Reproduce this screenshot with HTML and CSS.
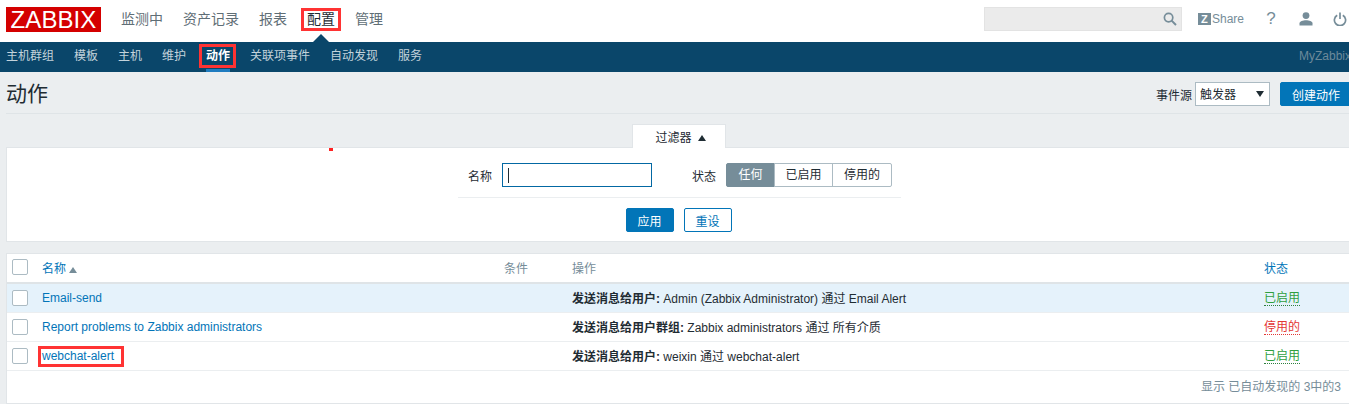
FILE: index.html
```html
<!DOCTYPE html>
<html lang="zh-CN">
<head>
<meta charset="utf-8">
<title>动作</title>
<link rel="stylesheet" href="styles.css">
</head>
<body>
<div class="page">
  <header class="topbar">
    <div class="logo">ZABBIX</div>
    <nav class="mainnav">
      <a>监测中</a><a>资产记录</a><a>报表</a><a class="selected"><span class="mark mark-top">配置</span></a><a>管理</a>
    </nav>
    <div class="tools">
      <div class="search">
        <svg class="ic-search" width="14" height="14" viewBox="0 0 14 14"><circle cx="5.6" cy="5.6" r="4.2" fill="none" stroke="#768d99" stroke-width="1.7"/><path d="M8.6 8.6l4.4 4.4" stroke="#768d99" stroke-width="2"/></svg>
      </div>
      <a class="share"><span class="zbadge">Z</span>Share</a>
      <a class="help">?</a>
      <svg class="ic-user" width="14" height="14" viewBox="0 0 14 14"><circle cx="7" cy="3.6" r="3.4" fill="#768d99"/><path d="M0.5 13.5v-2.2c0-2 3.5-3 6.5-3s6.500 1 6.500 3v2.200z" fill="#768d99"/></svg>
      <svg class="ic-power" width="14" height="14" viewBox="0 0 14 14"><path d="M4.200 3.200a5.600 5.600 0 1 0 5.600 0" fill="none" stroke="#768d99" stroke-width="1.700"/><path d="M7 0.500v6.500" stroke="#768d99" stroke-width="1.700"/></svg>
    </div>
  </header>
  <nav class="subnav">
    <a>主机群组</a><a>模板</a><a>主机</a><a>维护</a><a class="active"><span class="mark mark-sub">动作</span></a><a>关联项事件</a><a>自动发现</a><a>服务</a>
    <span class="myzabbix">MyZabbix</span>
  </nav>
  <div class="titlebar">
    <h1>动作</h1>
    <div class="controls">
      <label class="srclabel">事件源</label>
      <div class="select">触发器<span class="sel-arrow"></span></div>
      <button class="btn create">创建动作</button>
    </div>
  </div>
  <div class="filter-tabs"><div class="filter-tab">过滤器<span class="tri-up"></span></div></div>
  <section class="filter">
    <span class="red-dot"></span>
    <div class="filter-row">
      <label class="flabel">名称</label>
      <div class="input"><span class="caret"></span></div>
      <label class="flabel flabel-state">状态</label>
      <div class="seg"><span class="on">任何</span><span>已启用</span><span>停用的</span></div>
    </div>
    <div class="filter-actions">
      <button class="btn">应用</button>
      <button class="btn ghost">重设</button>
    </div>
  </section>
  <section class="list">
    <table>
      <thead>
        <tr>
          <th class="c-check"><span class="cb"></span></th>
          <th class="c-name"><a class="sortlink">名称</a><span class="tri-sort"></span></th>
          <th class="c-cond">条件</th>
          <th class="c-op">操作</th>
          <th class="c-state"><a class="sortlink">状态</a></th>
        </tr>
      </thead>
      <tbody>
        <tr class="hover">
          <td><span class="cb"></span></td>
          <td><a class="link">Email-send</a></td>
          <td></td>
          <td class="op"><b>发送消息给用户:</b> Admin (Zabbix Administrator) 通过 Email Alert</td>
          <td><a class="st green">已启用</a></td>
        </tr>
        <tr>
          <td><span class="cb"></span></td>
          <td><a class="link">Report problems to Zabbix administrators</a></td>
          <td></td>
          <td class="op"><b>发送消息给用户群组:</b> Zabbix administrators 通过 所有介质</td>
          <td><a class="st red">停用的</a></td>
        </tr>
        <tr>
          <td><span class="cb"></span></td>
          <td><a class="link mark mark-row">webchat-alert</a></td>
          <td></td>
          <td class="op"><b>发送消息给用户:</b> weixin 通过 webchat-alert</td>
          <td><a class="st green">已启用</a></td>
        </tr>
      </tbody>
    </table>
    <div class="foot">显示 已自动发现的 3中的3</div>
  </section>
</div>
</body>
</html>
```
FILE: styles.css
```css
html, body { margin: 0; padding: 0; height: 404px; overflow: hidden; background: #ebeef0; }
body { font-family: "Liberation Sans", "Noto Sans CJK SC", sans-serif; font-size: 12px; color: #1f2c33; }
.page { width: 1362px; height: 404px; overflow: hidden; }
a { text-decoration: none; }

.topbar { height: 42px; background: #fff; display: flex; align-items: flex-start; }
.logo { width: 95px; height: 25px; margin: 7px 0 0 6px; background: #d40000; color: #fff; font-size: 24px; line-height: 25px; text-align: center; letter-spacing: 0.1px; }
.mainnav { display: flex; margin-left: 10px; }
.mainnav a { padding: 0 10px; font-size: 14px; line-height: 20px; margin-top: 9px; color: #5f6e76; position: relative; height: 33px; }
.mainnav a.selected { color: #1f2c33; }
.mainnav a.selected::after { content: ""; position: absolute; left: 50%; bottom: 0; margin-left: -8px; border-left: 8px solid transparent; border-right: 8px solid transparent; border-bottom: 8px solid #0a466a; }
.tools { margin-left: auto; display: flex; align-items: center; height: 38px; padding-right: 15px; }
.search { width: 198px; height: 24px; box-sizing: border-box; background: #ebebeb; border: 1px solid #e3e3e3; display: flex; align-items: center; justify-content: flex-end; padding-right: 4px; }
.share { display: flex; align-items: center; margin-left: 16px; color: #768d99; font-size: 12px; width: 46px; }
.zbadge { width: 13px; height: 12px; background: #768d99; color: #fff; font-size: 11px; font-weight: bold; line-height: 12px; text-align: center; margin-right: 1px; }
.help { margin-left: 21px; width: 12px; text-align: center; color: #768d99; font-size: 17px; }
.ic-user { margin-left: 22px; }
.ic-power { margin-left: 20px; }

.mark { position: relative; display: inline-block; }
.mark-top { outline: 3px solid #ff3333; line-height: 17px; padding: 0 3px; margin: 2px -3px 0; vertical-align: top; }
.mark-sub { outline: 3px solid #ff3333; padding: 0 3px 0 4px; margin: 0 -3px 0 -4px; vertical-align: top; }
.mark-row { outline: 3px solid #ff3333; line-height: 15px; padding: 0 7px 0 1px; margin: 0 -7px 0 -1px; }

.subnav { height: 30px; background: #0a466a; display: flex; align-items: flex-start; padding-left: 6px; }
.subnav a { margin-right: 20px; color: #c3d3db; line-height: 18px; margin-top: 5px; height: 25px; position: relative; }
.subnav a.active { color: #fff; font-weight: bold; }
.subnav a.active::after { content: ""; position: absolute; left: 0; right: 0; bottom: 0; height: 3px; background: #1f7cc0; }
.myzabbix { margin-left: auto; margin-right: 11px; color: #6d8a9b; line-height: 18px; margin-top: 5px; }

.titlebar { height: 41px; margin-left: 6px; border-bottom: 1px solid #dfe4e7; display: flex; justify-content: space-between; align-items: flex-start; padding-right: 10px; }
h1 { margin: 0; font-size: 21px; font-weight: normal; line-height: 30px; margin-top: 7px; color: #1f2c33; }
.controls { display: flex; align-items: center; margin-top: 10px; }
.srclabel { margin-right: 3px; }
.select { width: 75px; height: 24px; box-sizing: border-box; background: #fff; border: 1px solid #acbbc3; padding-left: 4px; line-height: 24px; position: relative; margin-right: 10px; }
.sel-arrow { position: absolute; right: 5px; top: 8px; border-left: 4px solid transparent; border-right: 4px solid transparent; border-top: 6px solid #1f2c33; }
.btn { height: 24px; width: 48px; padding: 0; box-sizing: border-box; background: #0275b8; border: 1px solid #0275b8; border-radius: 2px; color: #fff; font: inherit; }
.btn.create { width: 72px; }
.btn.ghost { background: #fff; color: #0275b8; }

.filter-tabs { display: flex; justify-content: center; padding-right: 4px; margin-top: 10px; height: 24px; }
.filter-tab { width: 94px; height: 24px; box-sizing: border-box; background: #fff; border: 1px solid #e1e5e8; border-bottom: none; padding-left: 3px; text-align: center; line-height: 26px; position: relative; z-index: 1; }
.tri-up { display: inline-block; margin-left: 6px; border-left: 4px solid transparent; border-right: 4px solid transparent; border-bottom: 6px solid #1f2c33; vertical-align: 1px; }

.filter { background: #fff; margin-left: 6px; height: 95px; box-sizing: border-box; border: 1px solid #e1e5e8; border-right: none; position: relative; margin-top: -1px; }
.red-dot { position: absolute; left: 322px; top: 0; width: 4px; height: 3px; background: #ff2222; }
.filter-row { display: flex; align-items: center; width: 443px; height: 24px; margin: 15px 0 0 451px; padding-bottom: 10px; border-bottom: 1px solid #ebeef0; }
.flabel { margin-left: 10px; margin-right: 10px; }
.flabel-state { margin-left: 40px; }
.input { width: 150px; height: 24px; box-sizing: border-box; border: 1px solid #0368a3; display: flex; align-items: center; padding-left: 5px; }
.caret { width: 1px; height: 15px; background: #1f2c33; }
.seg { display: flex; height: 24px; }
.seg span { box-sizing: border-box; border: 1px solid #acbbc3; margin-left: -1px; text-align: center; line-height: 22px; }
.seg span:nth-child(1) { width: 49px; margin-left: 0; background: #768d99; border-color: #768d99; color: #fff; border-radius: 2px 0 0 2px; }
.seg span:nth-child(2) { width: 59px; }
.seg span:nth-child(3) { width: 60px; border-radius: 0 2px 2px 0; }
.filter-actions { display: flex; justify-content: center; gap: 10px; margin-top: 10px; padding-left: 5px; width: 1339px; box-sizing: border-box; padding-right: 1px; }

.list { background: #fff; margin: 11px 0 0 6px; height: 151px; box-sizing: border-box; border: 1px solid #e1e5e8; border-right: none; }
table { border-collapse: collapse; table-layout: fixed; width: 1349px; }
th { height: 26px; padding: 0 0 2px; font-weight: normal; text-align: left; border-bottom: 2px solid #dfe4e7; color: #768d99; box-sizing: content-box; }
td { height: 28px; padding: 0; border-bottom: 1px solid #ebeef0; color: #1f2c33; }
td.op { padding-bottom: 2px; height: 26px; }
.c-check { width: 35px; }
.c-name { width: 462px; }
.c-cond { width: 68px; }
.c-op { width: 692px; }
th .sortlink { color: #0275b8; }
.tri-sort { display: inline-block; margin-left: 3px; border-left: 4px solid transparent; border-right: 4px solid transparent; border-bottom: 6px solid #768d99; }
.cb { display: block; width: 16px; height: 16px; box-sizing: border-box; margin-left: 5px; border: 1px solid #acbbc3; border-radius: 2px; background: #fff; }
tr.hover td { background: #e5f2fb; }
.link { color: #0275b8; }
.st { border-bottom: 1px dotted; line-height: 14px; display: inline-block; }
.green { color: #2f9f3f; border-color: #2f7f3f; }
.red { color: #e33734; border-color: #e33734; }
.foot { text-align: right; color: #768d99; line-height: 30px; padding-right: 8px; width: 1334px; margin-top: 1px; }
```
